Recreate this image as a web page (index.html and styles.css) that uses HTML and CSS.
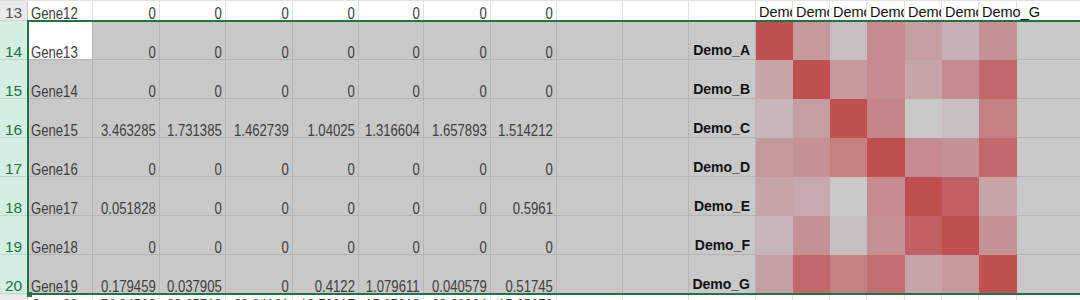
FILE: index.html
```html
<!DOCTYPE html>
<html>
<head>
<meta charset="utf-8">
<link rel="stylesheet" href="styles.css">
</head>
<body>
<div class="sheet">
  <!-- row 13 -->
  <div class="c rh">13</div>
  <div class="c"><span>Gene12</span></div>
  <div class="c n"><span>0</span></div><div class="c n"><span>0</span></div><div class="c n"><span>0</span></div><div class="c n"><span>0</span></div><div class="c n"><span>0</span></div><div class="c n"><span>0</span></div><div class="c n"><span>0</span></div>
  <div class="c"></div><div class="c"></div><div class="c"></div>
  <div class="c hd">Demo_A</div><div class="c hd">Demo_B</div><div class="c hd">Demo_C</div><div class="c hd">Demo_D</div><div class="c hd">Demo_E</div><div class="c hd">Demo_F</div><div class="c hd last">Demo_G</div>
  <div class="c"></div>

  <!-- row 14 -->
  <div class="c rh on">14</div>
  <div class="c sel act"><span>Gene13</span></div>
  <div class="c n sel"><span>0</span></div><div class="c n sel"><span>0</span></div><div class="c n sel"><span>0</span></div><div class="c n sel"><span>0</span></div><div class="c n sel"><span>0</span></div><div class="c n sel"><span>0</span></div><div class="c n sel"><span>0</span></div>
  <div class="c sel"></div><div class="c sel"></div>
  <div class="c sel lbl">Demo_A</div>
  <div class="c hm" style="background:#c04f4f"></div><div class="c hm" style="background:#c5989b"></div><div class="c hm" style="background:#c7bcbf"></div><div class="c hm" style="background:#c48c8f"></div><div class="c hm" style="background:#c59ea1"></div><div class="c hm" style="background:#c6b0b3"></div><div class="c hm" style="background:#c49295"></div>
  <div class="c sel"></div>

  <!-- row 15 -->
  <div class="c rh on">15</div>
  <div class="c sel"><span>Gene14</span></div>
  <div class="c n sel"><span>0</span></div><div class="c n sel"><span>0</span></div><div class="c n sel"><span>0</span></div><div class="c n sel"><span>0</span></div><div class="c n sel"><span>0</span></div><div class="c n sel"><span>0</span></div><div class="c n sel"><span>0</span></div>
  <div class="c sel"></div><div class="c sel"></div>
  <div class="c sel lbl">Demo_B</div>
  <div class="c hm" style="background:#c6a4a7"></div><div class="c hm" style="background:#c04f4f"></div><div class="c hm" style="background:#c5989b"></div><div class="c hm" style="background:#c48c8f"></div><div class="c hm" style="background:#c6a4a7"></div><div class="c hm" style="background:#c48c8f"></div><div class="c hm" style="background:#c2676a"></div>
  <div class="c sel"></div>

  <!-- row 16 -->
  <div class="c rh on">16</div>
  <div class="c sel"><span>Gene15</span></div>
  <div class="c n sel"><span>3.463285</span></div><div class="c n sel"><span>1.731385</span></div><div class="c n sel"><span>1.462739</span></div><div class="c n sel"><span>1.04025</span></div><div class="c n sel"><span>1.316604</span></div><div class="c n sel"><span>1.657893</span></div><div class="c n sel"><span>1.514212</span></div>
  <div class="c sel"></div><div class="c sel"></div>
  <div class="c sel lbl">Demo_C</div>
  <div class="c hm" style="background:#c7b6b9"></div><div class="c hm" style="background:#c59ea1"></div><div class="c hm" style="background:#c04f4f"></div><div class="c hm" style="background:#c48588"></div><div class="c hm" style="background:#c8c8c8"></div><div class="c hm" style="background:#c7bcbf"></div><div class="c hm" style="background:#c37f82"></div>
  <div class="c sel"></div>

  <!-- row 17 -->
  <div class="c rh on">17</div>
  <div class="c sel"><span>Gene16</span></div>
  <div class="c n sel"><span>0</span></div><div class="c n sel"><span>0</span></div><div class="c n sel"><span>0</span></div><div class="c n sel"><span>0</span></div><div class="c n sel"><span>0</span></div><div class="c n sel"><span>0</span></div><div class="c n sel"><span>0</span></div>
  <div class="c sel"></div><div class="c sel"></div>
  <div class="c sel lbl">Demo_D</div>
  <div class="c hm" style="background:#c5989b"></div><div class="c hm" style="background:#c49295"></div><div class="c hm" style="background:#c37f82"></div><div class="c hm" style="background:#c04f4f"></div><div class="c hm" style="background:#c48c8f"></div><div class="c hm" style="background:#c49295"></div><div class="c hm" style="background:#c2676a"></div>
  <div class="c sel"></div>

  <!-- row 18 -->
  <div class="c rh on">18</div>
  <div class="c sel"><span>Gene17</span></div>
  <div class="c n sel"><span>0.051828</span></div><div class="c n sel"><span>0</span></div><div class="c n sel"><span>0</span></div><div class="c n sel"><span>0</span></div><div class="c n sel"><span>0</span></div><div class="c n sel"><span>0</span></div><div class="c n sel"><span>0.5961</span></div>
  <div class="c sel"></div><div class="c sel"></div>
  <div class="c sel lbl">Demo_E</div>
  <div class="c hm" style="background:#c6a4a7"></div><div class="c hm" style="background:#c6aaad"></div><div class="c hm" style="background:#c8c8c8"></div><div class="c hm" style="background:#c48c8f"></div><div class="c hm" style="background:#c04f4f"></div><div class="c hm" style="background:#c16164"></div><div class="c hm" style="background:#c6a4a7"></div>
  <div class="c sel"></div>

  <!-- row 19 -->
  <div class="c rh on">19</div>
  <div class="c sel"><span>Gene18</span></div>
  <div class="c n sel"><span>0</span></div><div class="c n sel"><span>0</span></div><div class="c n sel"><span>0</span></div><div class="c n sel"><span>0</span></div><div class="c n sel"><span>0</span></div><div class="c n sel"><span>0</span></div><div class="c n sel"><span>0</span></div>
  <div class="c sel"></div><div class="c sel"></div>
  <div class="c sel lbl">Demo_F</div>
  <div class="c hm" style="background:#c7b6b9"></div><div class="c hm" style="background:#c49295"></div><div class="c hm" style="background:#c7bcbf"></div><div class="c hm" style="background:#c49295"></div><div class="c hm" style="background:#c16164"></div><div class="c hm" style="background:#c04f4f"></div><div class="c hm" style="background:#c49295"></div>
  <div class="c sel"></div>

  <!-- row 20 -->
  <div class="c rh on">20</div>
  <div class="c sel"><span>Gene19</span></div>
  <div class="c n sel"><span>0.179459</span></div><div class="c n sel"><span>0.037905</span></div><div class="c n sel"><span>0</span></div><div class="c n sel"><span>0.4122</span></div><div class="c n sel"><span>1.079611</span></div><div class="c n sel"><span>0.040579</span></div><div class="c n sel"><span>0.51745</span></div>
  <div class="c sel"></div><div class="c sel"></div>
  <div class="c sel lbl">Demo_G</div>
  <div class="c hm" style="background:#c59ea1"></div><div class="c hm" style="background:#c2676a"></div><div class="c hm" style="background:#c37f82"></div><div class="c hm" style="background:#c26d70"></div><div class="c hm" style="background:#c6a4a7"></div><div class="c hm" style="background:#c5989b"></div><div class="c hm" style="background:#c04f4f"></div>
  <div class="c sel"></div>

  <!-- row 21 -->
  <div class="c rh">21</div>
  <div class="c"><span>Gene20</span></div>
  <div class="c n"><span>56.94582</span></div><div class="c n"><span>38.65712</span></div><div class="c n"><span>33.84101</span></div><div class="c n"><span>18.79017</span></div><div class="c n"><span>15.65613</span></div><div class="c n"><span>28.60984</span></div><div class="c n"><span>15.65673</span></div>
  <div class="c"></div><div class="c"></div><div class="c"></div>
  <div class="c"></div><div class="c"></div><div class="c"></div><div class="c"></div><div class="c"></div><div class="c"></div><div class="c"></div>
  <div class="c"></div>

  <div class="selection"></div>
  <div class="handle"></div>
</div>
</body>
</html>
```

FILE: styles.css
```css
html, body {
  margin: 0;
  padding: 0;
  background: #ffffff;
  overflow: hidden;
}

.sheet {
  position: relative;
  display: grid;
  grid-template-columns: 28px 65px 67px 66px 67px 66px 65px 67px 66px 66px 66px 67px 37px 37px 37px 38px 37px 37px 38px 80px;
  grid-template-rows: 20px repeat(7, 39px) 19px;
  border-top: 1px solid #e2e2e2;
  width: 1110px;
  font-family: "Liberation Sans", "Arial", sans-serif;
}

.c {
  box-sizing: border-box;
  display: flex;
  align-items: flex-end;
  overflow: hidden;
  white-space: nowrap;
  padding: 0 3px;
  border-right: 1px solid #e1e1e1;
  border-bottom: 1px solid #e1e1e1;
  font-size: 16px;
  line-height: 13px;
  color: #404040;
}

.c > span {
  display: inline-block;
  flex: none;
  transform: scaleX(0.82);
  transform-origin: left bottom;
}

.n {
  justify-content: flex-end;
}

.n > span {
  transform-origin: right bottom;
}

.rh {
  justify-content: center;
  padding: 0;
  background: #e9e9e9;
  color: #555555;
  border-right-color: #c8c8c8;
  border-bottom-color: #d2d2d2;
  font-size: 15.5px;
  line-height: 14px;
}

.rh.on {
  background: #d4efdf;
  color: #217346;
  border-bottom-color: #b9dcc6;
}

.sel {
  background: #c8c8c8;
  border-color: #b5b5b5;
}

.act {
  background: #ffffff;
}

.hm {
  border-color: transparent;
}

.lbl {
  justify-content: flex-end;
  padding-right: 5px;
  padding-bottom: 1px;
  font-weight: bold;
  font-size: 14px;
  line-height: 16px;
  color: #111111;
}

.hd {
  padding-left: 3px;
  font-size: 14.5px;
  line-height: 16px;
  color: #111111;
}

.hd.last {
  overflow: visible;
}

.selection {
  position: absolute;
  left: 27px;
  top: 19px;
  right: -10px;
  height: 275px;
  box-sizing: border-box;
  border: 2px solid #217346;
  border-right: none;
  pointer-events: none;
}

.handle {
  position: absolute;
  left: 27px;
  top: 291px;
  width: 5px;
  height: 5px;
  background: #217346;
}
```
